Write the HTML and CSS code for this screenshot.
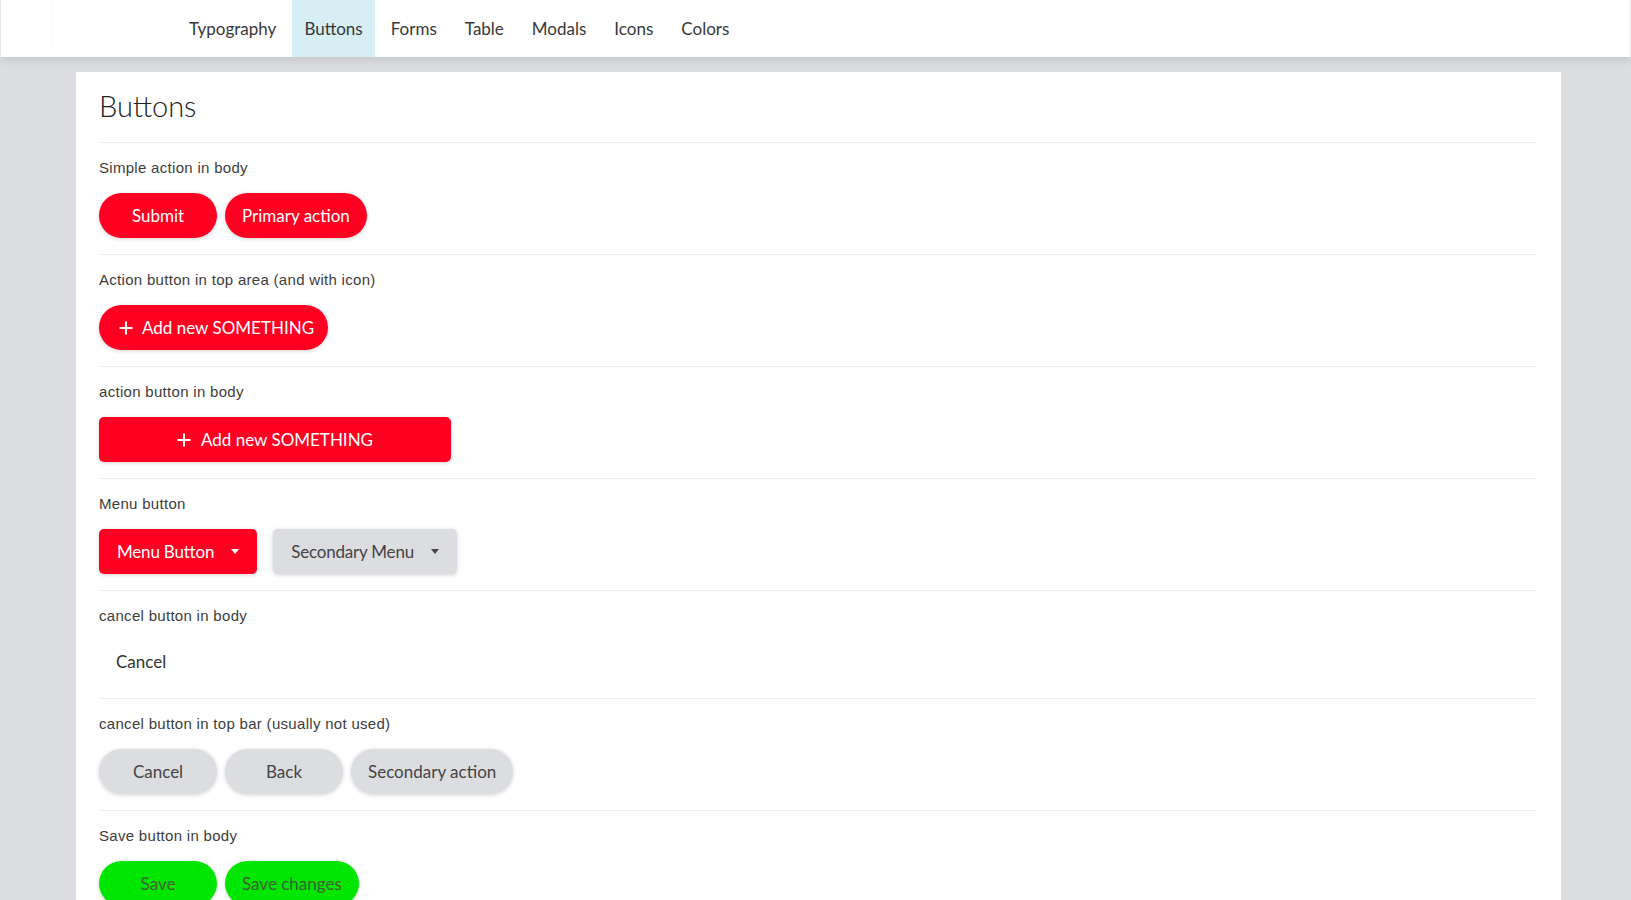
FILE: index.html
```html
<!DOCTYPE html>
<html lang="en">
<head>
<meta charset="utf-8">
<title>Buttons</title>
<link rel="stylesheet" href="styles.css">
</head>
<body>
<header class="topbar">
  <div class="brand"></div>
  <nav class="nav">
    <a class="nav-item">Typography</a>
    <a class="nav-item is-active">Buttons</a>
    <a class="nav-item">Forms</a>
    <a class="nav-item">Table</a>
    <a class="nav-item">Modals</a>
    <a class="nav-item">Icons</a>
    <a class="nav-item">Colors</a>
  </nav>
</header>
<main class="page">
  <section class="card">
    <h1 class="card-title">Buttons</h1>

    <div class="demo">
      <p class="demo-label">Simple action in body</p>
      <div class="btn-row">
        <button class="btn btn-red btn-pill">Submit</button>
        <button class="btn btn-red btn-pill">Primary action</button>
      </div>
    </div>

    <div class="demo">
      <p class="demo-label">Action button in top area (and with icon)</p>
      <div class="btn-row">
        <button class="btn btn-red btn-pill btn-icon">
          <svg class="plus" viewBox="0 0 14 14" width="14" height="14"><path d="M7 0.5V13.5M0.5 7H13.5" stroke="currentColor" stroke-width="2" fill="none"/></svg>
          <span>Add new SOMETHING</span>
        </button>
      </div>
    </div>

    <div class="demo">
      <p class="demo-label">action button in body</p>
      <div class="btn-row">
        <button class="btn btn-red btn-rect btn-wide">
          <svg class="plus" viewBox="0 0 14 14" width="14" height="14"><path d="M7 0.5V13.5M0.5 7H13.5" stroke="currentColor" stroke-width="2" fill="none"/></svg>
          <span>Add new SOMETHING</span>
        </button>
      </div>
    </div>

    <div class="demo">
      <p class="demo-label">Menu button</p>
      <div class="btn-row btn-row-menu">
        <button class="btn btn-red btn-rect btn-menu">
          <span>Menu Button</span>
          <span class="caret"></span>
        </button>
        <button class="btn btn-grey btn-rect btn-menu">
          <span>Secondary Menu</span>
          <span class="caret"></span>
        </button>
      </div>
    </div>

    <div class="demo">
      <p class="demo-label">cancel button in body</p>
      <div class="btn-row">
        <button class="btn btn-text">Cancel</button>
      </div>
    </div>

    <div class="demo">
      <p class="demo-label">cancel button in top bar (usually not used)</p>
      <div class="btn-row">
        <button class="btn btn-grey btn-pill">Cancel</button>
        <button class="btn btn-grey btn-pill">Back</button>
        <button class="btn btn-grey btn-pill">Secondary action</button>
      </div>
    </div>

    <div class="demo">
      <p class="demo-label">Save button in body</p>
      <div class="btn-row">
        <button class="btn btn-green btn-pill">Save</button>
        <button class="btn btn-green btn-pill">Save changes</button>
      </div>
    </div>
  </section>
</main>
</body>
</html>
```

FILE: styles.css
```css
html, body {
  margin: 0;
  height: 100%;
  overflow: hidden;
}

body {
  background: #dcdde0;
  font-family: Lato, "Liberation Sans", sans-serif;
  color: #333;
}

.topbar {
  position: relative;
  z-index: 1;
  display: flex;
  height: 57px;
  background: #fff;
  border-left: 1px solid #e6e6e6;
  border-right: 1px solid #e6e6e6;
  box-shadow: 0 3px 10px rgba(0, 0, 0, 0.10);
}

.brand {
  width: 50px;
  height: 48px;
  border-right: 1px solid #f8f8f8;
}

.nav {
  display: flex;
  margin-left: 125px;
  gap: 4px;
}

.nav-item {
  display: flex;
  align-items: center;
  padding: 0 12px;
  font-size: 17px;
  color: #383838;
  cursor: pointer;
}

.nav-item.is-active {
  background: #d5eff5;
}

.page {
  padding: 15px 70px 0 76px;
}

.card {
  background: #fff;
  padding: 17px 24px 20px 23px;
}

.card-title {
  margin: 0 0 19px;
  font-size: 29px;
  line-height: 34px;
  font-weight: 300;
  color: #222;
}

.demo {
  border-top: 1px solid #ececec;
  padding: 15px 0 16px;
}

.demo-label {
  margin: 0 0 15px;
  font-family: "Liberation Sans", Arial, sans-serif;
  font-size: 15px;
  line-height: 20px;
  letter-spacing: 0.3px;
  color: #3d3d3d;
}

.btn-row {
  display: flex;
  gap: 8px;
}

.btn-row-menu {
  gap: 16px;
}

.btn {
  display: inline-flex;
  align-items: center;
  justify-content: center;
  height: 45px;
  min-width: 118px;
  padding: 0 17px;
  border: none;
  font-family: Lato, "Liberation Sans", sans-serif;
  font-size: 17px;
  line-height: 1;
  letter-spacing: 0;
  cursor: pointer;
  box-shadow: 0 1px 4px rgba(0, 0, 0, 0.18);
}

.btn-pill {
  border-radius: 23px;
}

.btn-rect {
  border-radius: 5px;
}

.btn-red {
  background: #ff0022;
  color: #fff;
}

.btn-grey {
  background: #dcdde0;
  color: #444;
}

.btn-green {
  background: #00e600;
  color: #3e6334;
}

.btn-text {
  height: 41px;
  min-width: 0;
  background: transparent;
  color: #333;
  box-shadow: none;
}

.btn-icon {
  padding: 0 14px 0 20px;
  gap: 9px;
}

.btn-wide {
  width: 352px;
  gap: 10px;
}

.btn-menu {
  padding: 0 18px;
  gap: 17px;
}

.btn-menu span:first-child {
  letter-spacing: -0.2px;
}

.plus {
  width: 14px;
  height: 14px;
}

.caret {
  width: 0;
  height: 0;
  border-left: 4px solid transparent;
  border-right: 4px solid transparent;
  border-top: 5px solid currentColor;
}
```
